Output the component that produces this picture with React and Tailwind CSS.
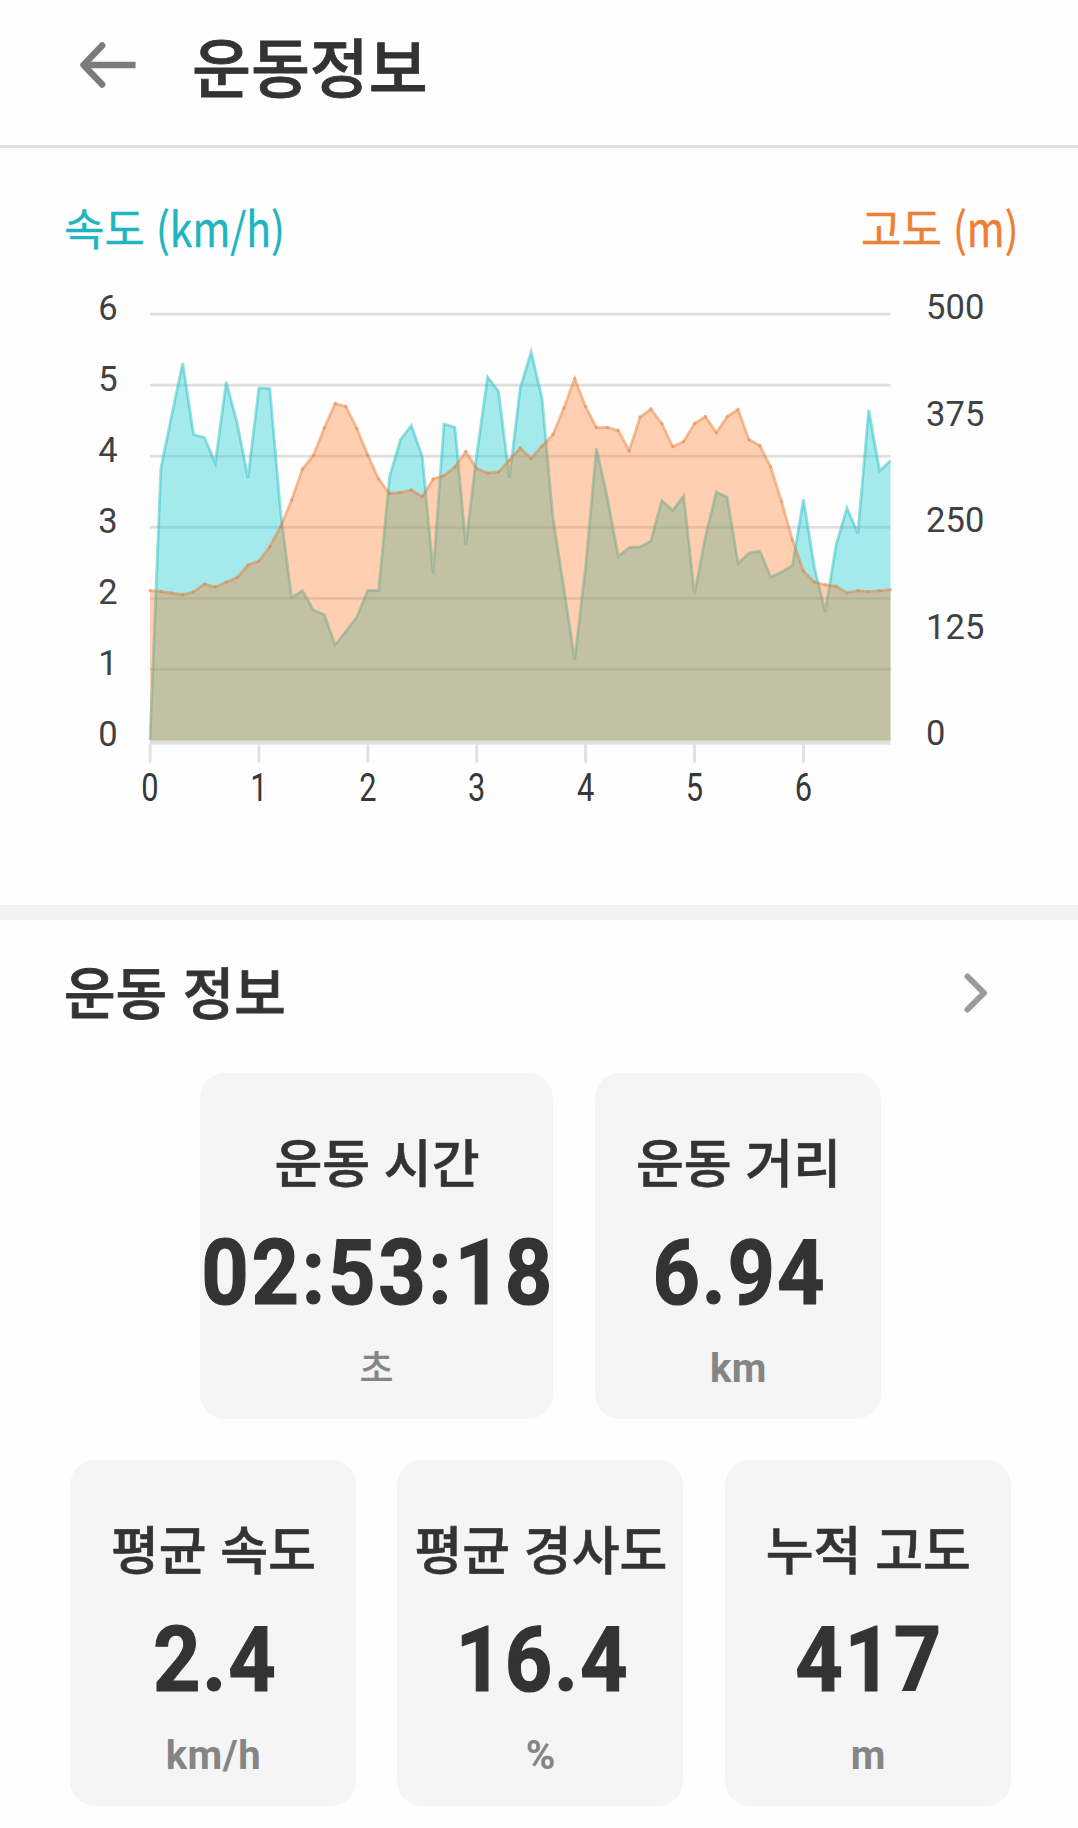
const speed = [
  740, 468.3, 415, 363, 434.5, 437.7, 463, 382, 423, 478, 388, 388.5, 513, 597.5, 590.7, 610, 614.5, 645, 631, 617,
  590.5, 590.5, 476.7, 440, 425.5, 456.5, 573, 424, 427.5, 545, 455, 377, 391.5, 478, 388, 352, 398.5, 518, 588, 660,
  567, 448.5, 498, 556.5, 547.5, 547, 541, 500.5, 510.5, 496, 594, 537, 492, 497.5, 563.5, 553, 551, 577, 572, 565.5,
  499.5, 567, 612, 545, 508, 533.5, 410, 471, 460.5,
];

const altitude = [
  590.5, 591.5, 593, 594.7, 592, 584, 587, 582, 577.5, 565, 561, 546.5, 526.5, 500, 469, 455.5, 428, 403.5, 406.5, 428.5,
  455, 479, 493.5, 492.5, 490, 496.5, 479, 475.5, 467, 451.5, 468.5, 473, 472, 460, 448, 458.5, 446, 434.5, 408, 378.5,
  406.5, 427.5, 427.5, 430.5, 450.5, 417, 409, 423.5, 446.5, 441.5, 423.5, 416.5, 432.5, 416.5, 409.5, 439.5, 445.5, 467,
  501.5, 540, 571, 582, 584.7, 586.3, 592.7, 590.7, 591.7, 590.7, 589.7,
];

const LEFT = 150;
const STEP = 10.89;
const RIGHT = LEFT + STEP * 68;
const BASE = 740.5;
const ROW = 71.07;

const points = (ys) => ys.map((y, i) => `${(LEFT + STEP * i).toFixed(2)},${y}`).join(" ");
const area = (ys) => `${LEFT},${BASE} ${points(ys)} ${RIGHT},${BASE}`;

function Chart() {
  return (
    <svg className="block h-[580px] w-full" viewBox="0 265 1078 580" fontFamily="Roboto, sans-serif">
      {[1, 2, 3, 4, 5, 6].map((n) => (
        <rect key={n} x={LEFT} y={BASE - n * ROW - 1.4} width={RIGHT - LEFT} height="2.8" fill="#dfdfdf" />
      ))}
      <rect x={LEFT} y={BASE} width={RIGHT - LEFT} height="4.2" fill="#e2e0dd" />
      {[0, 1, 2, 3, 4, 5, 6].map((n) => (
        <rect key={n} x={LEFT + n * 108.9 - 1.4} y="743.5" width="2.9" height="19" fill="#e0e0e0" />
      ))}
      <polygon points={area(speed)} fill="#16c8cd" fillOpacity="0.39" />
      <polyline points={points(speed)} fill="none" stroke="#2cc1c6" strokeOpacity="0.5" strokeWidth="2.8" />
      <polygon points={area(altitude)} fill="#ff771e" fillOpacity="0.345" />
      <polyline points={points(altitude)} fill="none" stroke="#e8742a" strokeOpacity="0.42" strokeWidth="2.8" />
      {altitude.map((y, i) => (
        <circle key={i} cx={LEFT + STEP * i} cy={y} r="1.7" fill="#e27b3c" fillOpacity="0.4" />
      ))}
      <g fill="#3f4143" fontSize="34.5">
        {[0, 1, 2, 3, 4, 5, 6].map((n) => (
          <text key={n} x="108" y={746 - n * 71.05} textAnchor="middle">{n}</text>
        ))}
        {[0, 125, 250, 375, 500].map((n, i) => (
          <text key={n} x="926" y={745 - i * 106.5} letterSpacing="0.1">{n}</text>
        ))}
      </g>
      <g fill="#373737" fontSize="38.5">
        {[0, 1, 2, 3, 4, 5, 6].map((n) => (
          <text key={n} transform={`translate(${LEFT + n * 108.9} 800.6) scale(.8 1)`} textAnchor="middle">{n}</text>
        ))}
      </g>
    </svg>
  );
}

function Stat({ label, value, unit, wide, korean }) {
  return (
    <div className={`flex h-[346px] shrink-0 flex-col items-center whitespace-nowrap rounded-[25px] bg-[#f5f5f5] ${wide ? "w-[353px]" : "w-[286px]"}`}>
      <div className="mt-[58px] h-[60px] pl-px text-[52px] font-medium leading-[60px] text-[#333] [-webkit-text-stroke:0.6px_#333] [word-spacing:2px]">{label}</div>
      <div className={`mt-[36px] h-[92px] origin-center scale-x-[0.91] font-[Roboto,sans-serif] text-[91px] font-bold leading-[92px] text-[#333] [-webkit-text-stroke:1.2px_#333] ${wide ? "pl-[3px] tracking-[3px]" : "pl-[4px] tracking-[2px]"}`}>{value}</div>
      <div className={korean ? "mt-[25px] h-[44px] text-[37px] font-medium leading-[44px] text-[#858585]" : "mt-[28px] h-[44px] pl-px font-[Roboto,sans-serif] text-[40px] font-bold leading-[44px] tracking-[0.6px] text-[#858585]"}>{unit}</div>
    </div>
  );
}

export default function App() {
  return (
    <div className="flex h-[1828px] w-[1078px] flex-col overflow-hidden bg-[#fefefe] font-['Noto_Sans_CJK_KR',sans-serif]">
      <header className="flex h-[148px] items-start border-b-3 border-[#e2e2e2]">
        <svg className="ml-[76px] mt-[38px] h-[54px] w-[64px]" viewBox="76 40 64 54" fill="none" stroke="#7b7b7b" strokeWidth="6.5">
          <path d="M102.2 47.5 83.5 67 102.2 86.5" strokeLinecap="round" strokeLinejoin="round" />
          <path d="M84 67H135.5" />
        </svg>
        <h1 className="ml-[52px] mt-[24px] h-[80px] text-[64px] font-medium leading-[80px] text-[#333] [-webkit-text-stroke:0.8px_#333]">운동정보</h1>
      </header>

      <section className="flex h-[757px] flex-col">
        <div className="flex h-[117px] items-start justify-between pl-[64px] pr-[60px] pt-[49px] text-[44px] leading-[60px]">
          <div className="flex text-[#20b5be] [-webkit-text-stroke:0.4px_#20b5be]">속도<span className="ml-[11px] w-[126px] origin-left scale-x-[0.87] text-[47px]">(km/h)</span></div>
          <div className="flex text-[#ec8036] [-webkit-text-stroke:0.4px_#ec8036]">고도<span className="ml-[11px] w-[65px] origin-left scale-x-[0.87] text-[47px]">(m)</span></div>
        </div>
        <Chart />
      </section>

      <div className="h-[15px] bg-[#f1f2f4]" />

      <section>
        <div className="flex h-[153px] items-start justify-between">
          <h2 className="ml-[64px] mt-[35px] h-[70px] text-[56px] font-medium leading-[70px] text-[#333] [-webkit-text-stroke:0.8px_#333] [word-spacing:3px]">운동 정보</h2>
          <svg className="mr-[86px] mt-[49px] h-[48px] w-[32px]" viewBox="960 969 32 48" fill="none" stroke="#9a9a9a" strokeWidth="6" strokeLinecap="round" strokeLinejoin="round">
            <path d="M967.5 976.5 984 993 967.5 1009.5" />
          </svg>
        </div>
        <div className="flex gap-[42px] pl-[200px]">
          <Stat wide korean label="운동 시간" value="02:53:18" unit="초" />
          <Stat label="운동 거리" value="6.94" unit="km" />
        </div>
        <div className="mt-[41px] flex gap-[41.4px] pl-[70px]">
          <Stat label="평균 속도" value="2.4" unit="km/h" />
          <Stat label="평균 경사도" value="16.4" unit="%" />
          <Stat label="누적 고도" value="417" unit="m" />
        </div>
      </section>
    </div>
  );
}
